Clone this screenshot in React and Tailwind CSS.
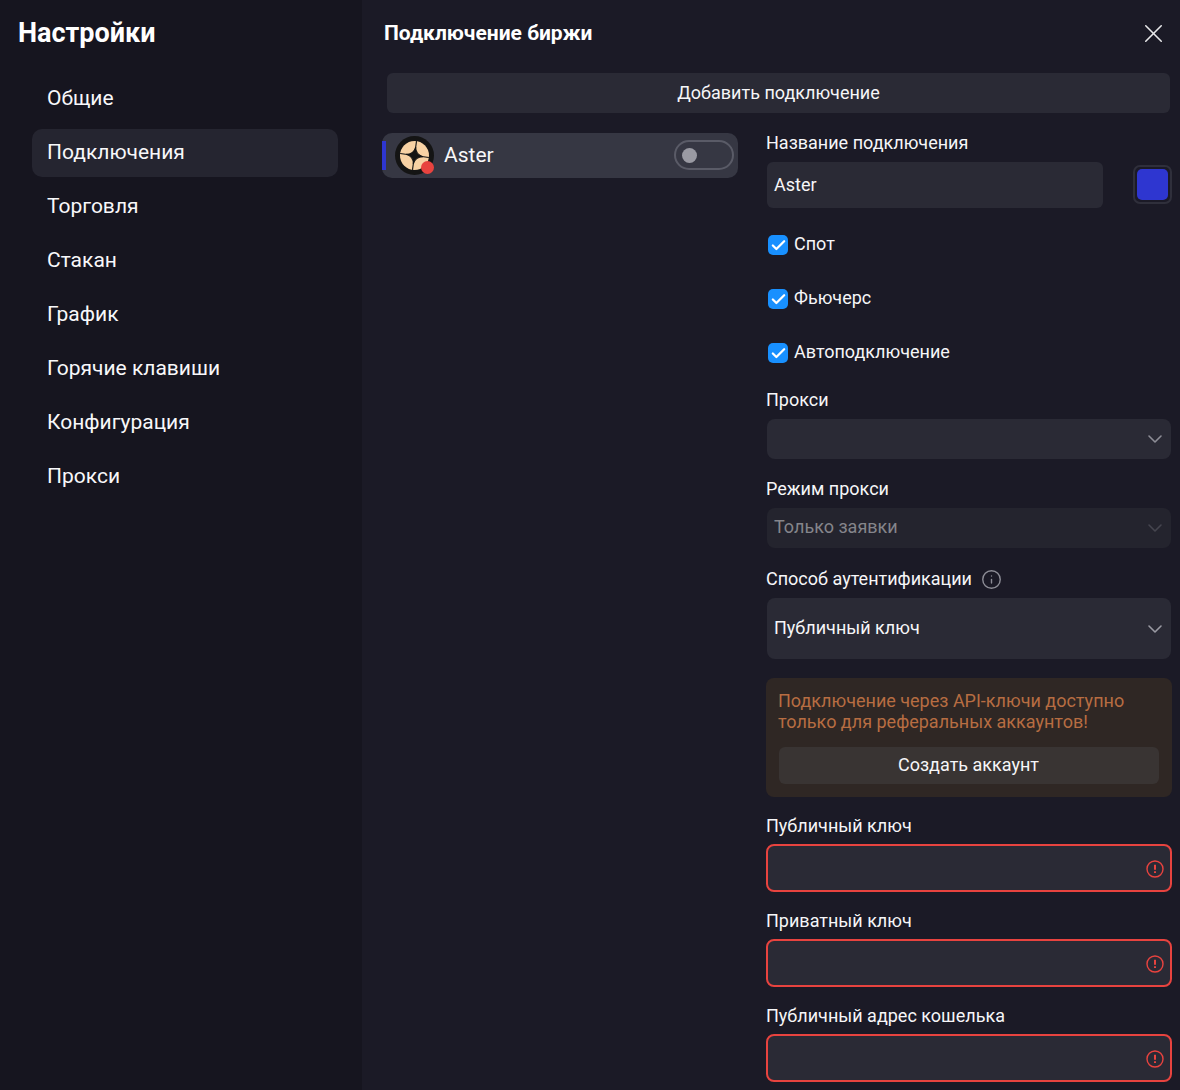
import { X, ChevronDown, Check, Info } from "lucide-react";

const NAV = ["Общие", "Подключения", "Торговля", "Стакан", "График", "Горячие клавиши", "Конфигурация", "Прокси"];

function AsterLogo() {
    return (
        <div className="relative w-[39px] h-[39px] shrink-0">
            <svg viewBox="0 0 39 39" className="w-full h-full">
                <circle cx="19.5" cy="19.5" r="19.5" fill="#141414" />
                <circle cx="19.5" cy="19.5" r="14.5" fill="#f8d2a4" />
                <g transform="rotate(8 19.5 19.5)">
                    <path d="M19.5 5v29M5 19.5h29" stroke="#141414" strokeWidth="1.1" />
                    <path d="M19.5 11 C20.2 16.2 22.8 18.8 28 19.5 C22.8 20.2 20.2 22.8 19.5 28 C18.8 22.8 16.2 20.2 11 19.5 C16.2 18.8 18.8 16.2 19.5 11Z" fill="#141414" stroke="#141414" strokeWidth="1" />
                </g>
            </svg>
            <span className="absolute right-0 bottom-[1px] w-[13px] h-[13px] rounded-full bg-[#e8433f]" />
        </div>
    );
}

function Field({ label, children, className = "" }) {
    return (
        <div className={className}>
            <div className="h-[20px] leading-[20px] text-[18px] text-[#f6f6f8]">{label}</div>
            {children}
        </div>
    );
}

function CheckRow({ label, className = "" }) {
    return (
        <label className={`flex items-center h-[20px] pl-[2px] ${className}`}>
            <span className="w-[20px] h-[20px] rounded-[5px] bg-[#1890ff] flex items-center justify-center">
                <Check className="w-[17px] h-[17px] text-white" strokeWidth={3.2} />
            </span>
            <span className="ml-[6px] pb-[4px] text-[18px] text-[#f6f6f8]">{label}</span>
        </label>
    );
}

function ErrorInput() {
    return (
        <div className="mt-[8px] h-[48px] pt-[1px] rounded-[8px] border-2 border-[#e8433f] bg-[#2a2a35] flex items-center justify-end pr-[6px]">
            <svg viewBox="0 0 18 18" className="w-[18px] h-[18px]" fill="none">
                <circle cx="9" cy="9" r="8" stroke="#e8433f" strokeWidth="1.4" />
                <path d="M9 4.8v5" stroke="#e8433f" strokeWidth="2" />
                <path d="M9 11.2v1.9" stroke="#e8433f" strokeWidth="2" />
            </svg>
        </div>
    );
}

export default function App() {
    return (
        <div className="flex w-[1180px] h-[1090px] overflow-hidden bg-[#1b1a26] text-white font-['Roboto',sans-serif]">
            {/* Sidebar */}
            <aside className="w-[362px] shrink-0 bg-[#16151f] pt-[17px]">
                <h1 className="pl-[18px] h-[33px] leading-[33px] text-[27px] font-bold text-white">Настройки</h1>
                <nav className="mt-[25px] ml-[32px] w-[306px] flex flex-col gap-[6px]">
                    {NAV.map((item) => (
                        <div
                            key={item}
                            className={`h-[48px] pl-[15px] pb-[1px] flex items-center rounded-[10px] text-[21px] text-[#f8f8fa] ${
                                item === "Подключения" ? "bg-[#252530]" : ""
                            }`}
                        >
                            {item}
                        </div>
                    ))}
                </nav>
            </aside>

            {/* Main */}
            <main className="flex-1 pt-[20px]">
                <div className="flex items-center justify-between h-[26px] pl-[22px] pr-[11px]">
                    <h2 className="pt-[2px] text-[21px] font-bold text-white">Подключение биржи</h2>
                    <X className="w-[31px] h-[31px] text-[#e8e8ea]" strokeWidth={1.2} />
                </div>

                <div className="mt-[27px] ml-[25px] mr-[10px] h-[40px] pb-[2px] rounded-[6px] bg-[#2a2a35] flex items-center justify-center text-[18px] text-[#f6f6f8]">
                    Добавить подключение
                </div>

                <div className="flex mt-[20px] ml-[20px]">
                    {/* Connection list */}
                    <div className="w-[356px] shrink-0">
                        <div className="relative h-[45px] rounded-[10px] bg-[#363743] flex items-center pl-[13px] pr-[4px]">
                            <span className="absolute left-0 top-[8px] w-[4px] h-[29px] bg-[#2e36d0]" />
                            <AsterLogo />
                            <span className="ml-[10px] text-[21px] text-[#f8f8fa]">Aster</span>
                            <span className="ml-auto self-start mt-[7px] w-[60px] h-[30px] rounded-full border-2 border-[#5a5b67] flex items-center pl-[6px]">
                                <span className="w-[15px] h-[15px] rounded-full bg-[#9a9aa3]" />
                            </span>
                        </div>
                    </div>

                    {/* Form */}
                    <div className="ml-[28px] w-[406px]">
                        <Field label="Название подключения">
                            <div className="flex items-start mt-[9px]">
                                <div className="ml-[1px] w-[336px] h-[46px] pb-[2px] rounded-[6px] bg-[#2a2a35] flex items-center pl-[7px] text-[18px] text-[#f6f6f8]">
                                    Aster
                                </div>
                                <div className="ml-[30px] mt-[3px] w-[39px] h-[39px] rounded-[7px] border-2 border-[#2f2f3b] bg-[#1b1a26] p-[2px]">
                                    <div className="w-full h-full rounded-[5px] bg-[#2e36d0]" />
                                </div>
                            </div>
                        </Field>

                        <CheckRow label="Спот" className="mt-[27px]" />
                        <CheckRow label="Фьючерс" className="mt-[34px]" />
                        <CheckRow label="Автоподключение" className="mt-[34px]" />

                        <Field label="Прокси" className="mt-[27px]">
                            <div className="mt-[9px] ml-[1px] mr-px h-[40px] rounded-[8px] bg-[#2a2a35] flex items-center justify-end pr-[4px]">
                                <ChevronDown className="w-[24px] h-[24px] text-[#8d8d96]" strokeWidth={1.6} />
                            </div>
                        </Field>

                        <Field label="Режим прокси" className="mt-[20px]">
                            <div className="mt-[9px] ml-[1px] mr-px h-[40px] rounded-[8px] bg-[#24242e] flex items-center justify-between pl-[7px] pr-[4px]">
                                <span className="pb-[3px] text-[18px] text-[#85858b]">Только заявки</span>
                                <ChevronDown className="w-[24px] h-[24px] text-[#45454f]" strokeWidth={1.6} />
                            </div>
                        </Field>

                        <Field
                            label={
                                <span className="flex items-center h-[20px]">
                                    Способ аутентификации
                                    <Info className="ml-[9px] w-[21px] h-[21px] shrink-0 text-[#8d8d96]" strokeWidth={1.6} />
                                </span>
                            }
                            className="mt-[21px]"
                        >
                            <div className="mt-[9px] ml-[1px] mr-px h-[61px] rounded-[8px] bg-[#2a2a35] flex items-center justify-between pl-[7px] pr-[4px]">
                                <span className="pb-[2px] text-[18px] text-[#f6f6f8]">Публичный ключ</span>
                                <ChevronDown className="w-[24px] h-[24px] text-[#9a9aa3]" strokeWidth={1.6} />
                            </div>
                        </Field>

                        <div className="mt-[19px] h-[119px] rounded-[8px] bg-[#2f2724] pt-[12px] pl-[12px] pr-[13px]">
                            <p className="text-[18px] leading-[21px] text-[#b76d42]">
                                Подключение через API-ключи доступно
                                <br />
                                только для реферальных аккаунтов!
                            </p>
                            <div className="mt-[15px] ml-px h-[37px] pb-[2px] pr-px rounded-[6px] bg-[#393433] flex items-center justify-center text-[18px] text-[#f6f6f8]">
                                Создать аккаунт
                            </div>
                        </div>

                        <Field label="Публичный ключ" className="mt-[19px]">
                            <ErrorInput />
                        </Field>
                        <Field label="Приватный ключ" className="mt-[19px]">
                            <ErrorInput />
                        </Field>
                        <Field label="Публичный адрес кошелька" className="mt-[19px]">
                            <ErrorInput />
                        </Field>
                    </div>
                </div>
            </main>
        </div>
    );
}
